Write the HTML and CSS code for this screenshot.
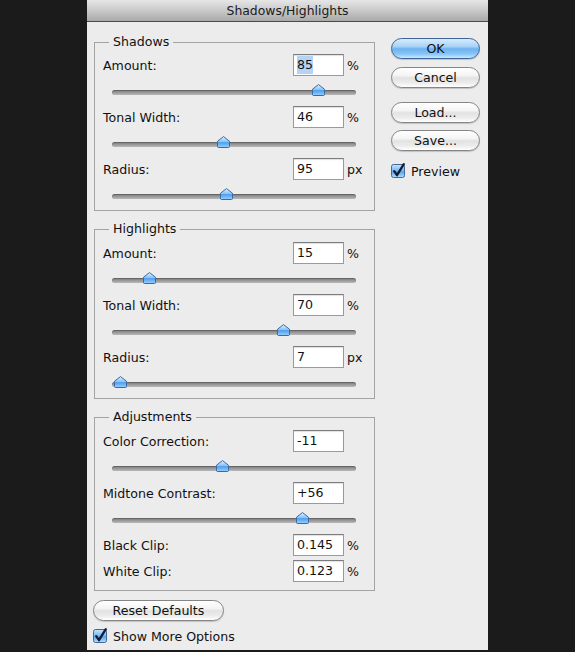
FILE: index.html
```html
<!DOCTYPE html>
<html>
<head>
<meta charset="utf-8">
<title>Shadows/Highlights</title>
<link rel="stylesheet" href="styles.css">
</head>
<body>
<svg class="defs" aria-hidden="true">
  <defs>
    <linearGradient id="thumbGrad" x1="0" y1="0" x2="0" y2="1">
      <stop offset="0" stop-color="#e4f2ff"/>
      <stop offset="0.45" stop-color="#8cc4f5"/>
      <stop offset="0.55" stop-color="#4f9ff0"/>
      <stop offset="1" stop-color="#9ad2ff"/>
    </linearGradient>
    <linearGradient id="boxGrad" x1="0" y1="0" x2="0" y2="1">
      <stop offset="0" stop-color="#c9e4fb"/>
      <stop offset="0.5" stop-color="#77b6f0"/>
      <stop offset="0.55" stop-color="#5aa3ea"/>
      <stop offset="1" stop-color="#b4e0ff"/>
    </linearGradient>
  </defs>
</svg>
<div class="dialog">
  <div class="titlebar">Shadows/Highlights</div>
  <div class="body">
    <div class="left">
      <fieldset class="group g1">
        <legend>Shadows</legend>
        <div class="row"><span class="label">Amount:</span><div class="field"><span class="sel">85</span></div><span class="unit">%</span></div>
        <div class="slider-row"><div class="slider"><svg class="thumb" style="left:calc(84.8% - 6.5px)" viewBox="0 0 13 12"><path d="M0.5 5.2 L6.5 0.6 L12.5 5.2 V10.5 Q12.5 11.5 11.5 11.5 H1.5 Q0.5 11.5 0.5 10.5 Z" fill="url(#thumbGrad)" stroke="#3a6aa3"/></svg></div></div>
        <div class="row"><span class="label">Tonal Width:</span><div class="field">46</div><span class="unit">%</span></div>
        <div class="slider-row"><div class="slider"><svg class="thumb" style="left:calc(45.9% - 6.5px)" viewBox="0 0 13 12"><path d="M0.5 5.2 L6.5 0.6 L12.5 5.2 V10.5 Q12.5 11.5 11.5 11.5 H1.5 Q0.5 11.5 0.5 10.5 Z" fill="url(#thumbGrad)" stroke="#3a6aa3"/></svg></div></div>
        <div class="row"><span class="label">Radius:</span><div class="field">95</div><span class="unit">px</span></div>
        <div class="slider-row"><div class="slider"><svg class="thumb" style="left:calc(47.1% - 6.5px)" viewBox="0 0 13 12"><path d="M0.5 5.2 L6.5 0.6 L12.5 5.2 V10.5 Q12.5 11.5 11.5 11.5 H1.5 Q0.5 11.5 0.5 10.5 Z" fill="url(#thumbGrad)" stroke="#3a6aa3"/></svg></div></div>
      </fieldset>

      <fieldset class="group g2">
        <legend>Highlights</legend>
        <div class="row"><span class="label">Amount:</span><div class="field">15</div><span class="unit">%</span></div>
        <div class="slider-row"><div class="slider"><svg class="thumb" style="left:calc(15.2% - 6.5px)" viewBox="0 0 13 12"><path d="M0.5 5.2 L6.5 0.6 L12.5 5.2 V10.5 Q12.5 11.5 11.5 11.5 H1.5 Q0.5 11.5 0.5 10.5 Z" fill="url(#thumbGrad)" stroke="#3a6aa3"/></svg></div></div>
        <div class="row"><span class="label">Tonal Width:</span><div class="field">70</div><span class="unit">%</span></div>
        <div class="slider-row"><div class="slider"><svg class="thumb" style="left:calc(70.1% - 6.5px)" viewBox="0 0 13 12"><path d="M0.5 5.2 L6.5 0.6 L12.5 5.2 V10.5 Q12.5 11.5 11.5 11.5 H1.5 Q0.5 11.5 0.5 10.5 Z" fill="url(#thumbGrad)" stroke="#3a6aa3"/></svg></div></div>
        <div class="row"><span class="label">Radius:</span><div class="field">7</div><span class="unit">px</span></div>
        <div class="slider-row"><div class="slider"><svg class="thumb" style="left:calc(3.3% - 6.5px)" viewBox="0 0 13 12"><path d="M0.5 5.2 L6.5 0.6 L12.5 5.2 V10.5 Q12.5 11.5 11.5 11.5 H1.5 Q0.5 11.5 0.5 10.5 Z" fill="url(#thumbGrad)" stroke="#3a6aa3"/></svg></div></div>
      </fieldset>

      <fieldset class="group g3">
        <legend>Adjustments</legend>
        <div class="row"><span class="label">Color Correction:</span><div class="field">-11</div><span class="unit"></span></div>
        <div class="slider-row"><div class="slider"><svg class="thumb" style="left:calc(45.1% - 6.5px)" viewBox="0 0 13 12"><path d="M0.5 5.2 L6.5 0.6 L12.5 5.2 V10.5 Q12.5 11.5 11.5 11.5 H1.5 Q0.5 11.5 0.5 10.5 Z" fill="url(#thumbGrad)" stroke="#3a6aa3"/></svg></div></div>
        <div class="row"><span class="label">Midtone Contrast:</span><div class="field">+56</div><span class="unit"></span></div>
        <div class="slider-row"><div class="slider"><svg class="thumb" style="left:calc(77.9% - 6.5px)" viewBox="0 0 13 12"><path d="M0.5 5.2 L6.5 0.6 L12.5 5.2 V10.5 Q12.5 11.5 11.5 11.5 H1.5 Q0.5 11.5 0.5 10.5 Z" fill="url(#thumbGrad)" stroke="#3a6aa3"/></svg></div></div>
        <div class="row"><span class="label">Black Clip:</span><div class="field">0.145</div><span class="unit">%</span></div>
        <div class="row"><span class="label">White Clip:</span><div class="field">0.123</div><span class="unit">%</span></div>
      </fieldset>

      <div class="btn reset">Reset Defaults</div>
      <label class="check more">
        <svg class="cb" viewBox="0 0 16 16"><rect x="0.5" y="1.5" width="13" height="13" rx="2" fill="url(#boxGrad)" stroke="#43679b"/><path d="M3.2 8.2 L6 12.2 L12.8 1.2" fill="none" stroke="#101c33" stroke-width="2.3" stroke-linecap="round" stroke-linejoin="round"/></svg>
        <span>Show More Options</span>
      </label>
    </div>

    <div class="right">
      <div class="btn default ok">OK</div>
      <div class="btn cancel">Cancel</div>
      <div class="btn load">Load...</div>
      <div class="btn save">Save...</div>
      <label class="check preview">
        <svg class="cb" viewBox="0 0 16 16"><rect x="0.5" y="1.5" width="13" height="13" rx="2" fill="url(#boxGrad)" stroke="#43679b"/><path d="M3.2 8.2 L6 12.2 L12.8 1.2" fill="none" stroke="#101c33" stroke-width="2.3" stroke-linecap="round" stroke-linejoin="round"/></svg>
        <span>Preview</span>
      </label>
    </div>
  </div>
</div>
</body>
</html>
```

FILE: styles.css
```css
html, body {
  margin: 0;
  padding: 0;
  background: #1b1b1b;
}
body {
  font-family: "DejaVu Sans", "Liberation Sans", sans-serif;
  font-size: 12.6px;
  color: #111;
}
.defs {
  position: absolute;
  width: 0;
  height: 0;
}
.dialog {
  width: 401px;
  height: 650px;
  margin-left: 87px;
  background: #ececec;
  box-sizing: border-box;
}
.titlebar {
  height: 21px;
  line-height: 21px;
  border-bottom: 1px solid #4a4a4a;
  background: linear-gradient(#e6e6e6, #c9c9c9 50%, #a9a9a9);
  text-align: center;
  font-size: 12.4px;
  color: #1a1a1a;
}
.body {
  display: flex;
  padding-left: 7px;
}
.left {
  width: 281px;
  display: flex;
  flex-direction: column;
}
.right {
  width: 89px;
  margin-left: 16px;
  padding-top: 16px;
  display: flex;
  flex-direction: column;
}
.group {
  margin: 0;
  border: 1px solid #a3a3a3;
  padding: 2px 7px 2px 8px;
  min-width: 0;
}
.g1 { margin-top: 12px; }
.g2 { margin-top: 10px; padding-top: 3px; }
.g3 { margin-top: 10px; padding-top: 3px; padding-bottom: 6px; }
.group legend {
  margin-left: 6px;
  padding: 0 4px;
  line-height: 16px;
  font-size: 12.6px;
  color: #111;
}
.row {
  display: flex;
  align-items: center;
  height: 26px;
}
.label {
  flex: 1;
}
.field {
  width: 51px;
  height: 22px;
  box-sizing: border-box;
  background: #fff;
  border: 1px solid #9a9a9a;
  border-top-color: #7c7c7c;
  box-shadow: inset 0 1px 1px rgba(0, 0, 0, 0.12);
  padding-left: 3px;
  line-height: 20px;
  font-size: 12.6px;
}
.sel {
  background: #b3d3f7;
  padding: 1px 0 2px;
}
.unit {
  width: 20px;
  margin-left: 3px;
}
.slider-row {
  height: 26px;
  display: flex;
  align-items: center;
  padding-top: 2px;
  box-sizing: border-box;
}
.slider {
  position: relative;
  margin-left: 9px;
  width: 244px;
  height: 5px;
  border-radius: 3px;
  background: linear-gradient(#7e7e7e, #999 50%, #b9b9b9);
  box-shadow: inset 0 1px 1px rgba(0, 0, 0, 0.25);
}
.thumb {
  position: absolute;
  bottom: -1px;
  width: 13px;
  height: 12px;
  display: block;
}
.btn {
  display: flex;
  align-items: center;
  justify-content: center;
  height: 21px;
  box-sizing: border-box;
  border: 1px solid #858585;
  border-radius: 11px;
  background: linear-gradient(#ffffff, #f4f4f4 40%, #e2e2e2 52%, #ececec 78%, #ffffff);
  box-shadow: 0 1px 1px rgba(0, 0, 0, 0.18);
  color: #111;
  font-size: 12.6px;
}
.btn.default {
  border-color: #3f6396;
  background: linear-gradient(#d6ecfd, #a6d2f7 40%, #6db2f0 52%, #86c4f6 78%, #c5eaff);
}
.cancel { margin-top: 8px; }
.load { margin-top: 14px; }
.save { margin-top: 7px; }
.reset {
  width: 131px;
  margin-left: -1px;
  margin-top: 9px;
}
.check {
  display: flex;
  align-items: center;
  gap: 4px;
}
.cb {
  width: 16px;
  height: 16px;
  overflow: visible;
  flex: none;
}
.preview {
  margin-top: 12px;
}
.more {
  margin-top: 7px;
  margin-left: -1px;
}
```
